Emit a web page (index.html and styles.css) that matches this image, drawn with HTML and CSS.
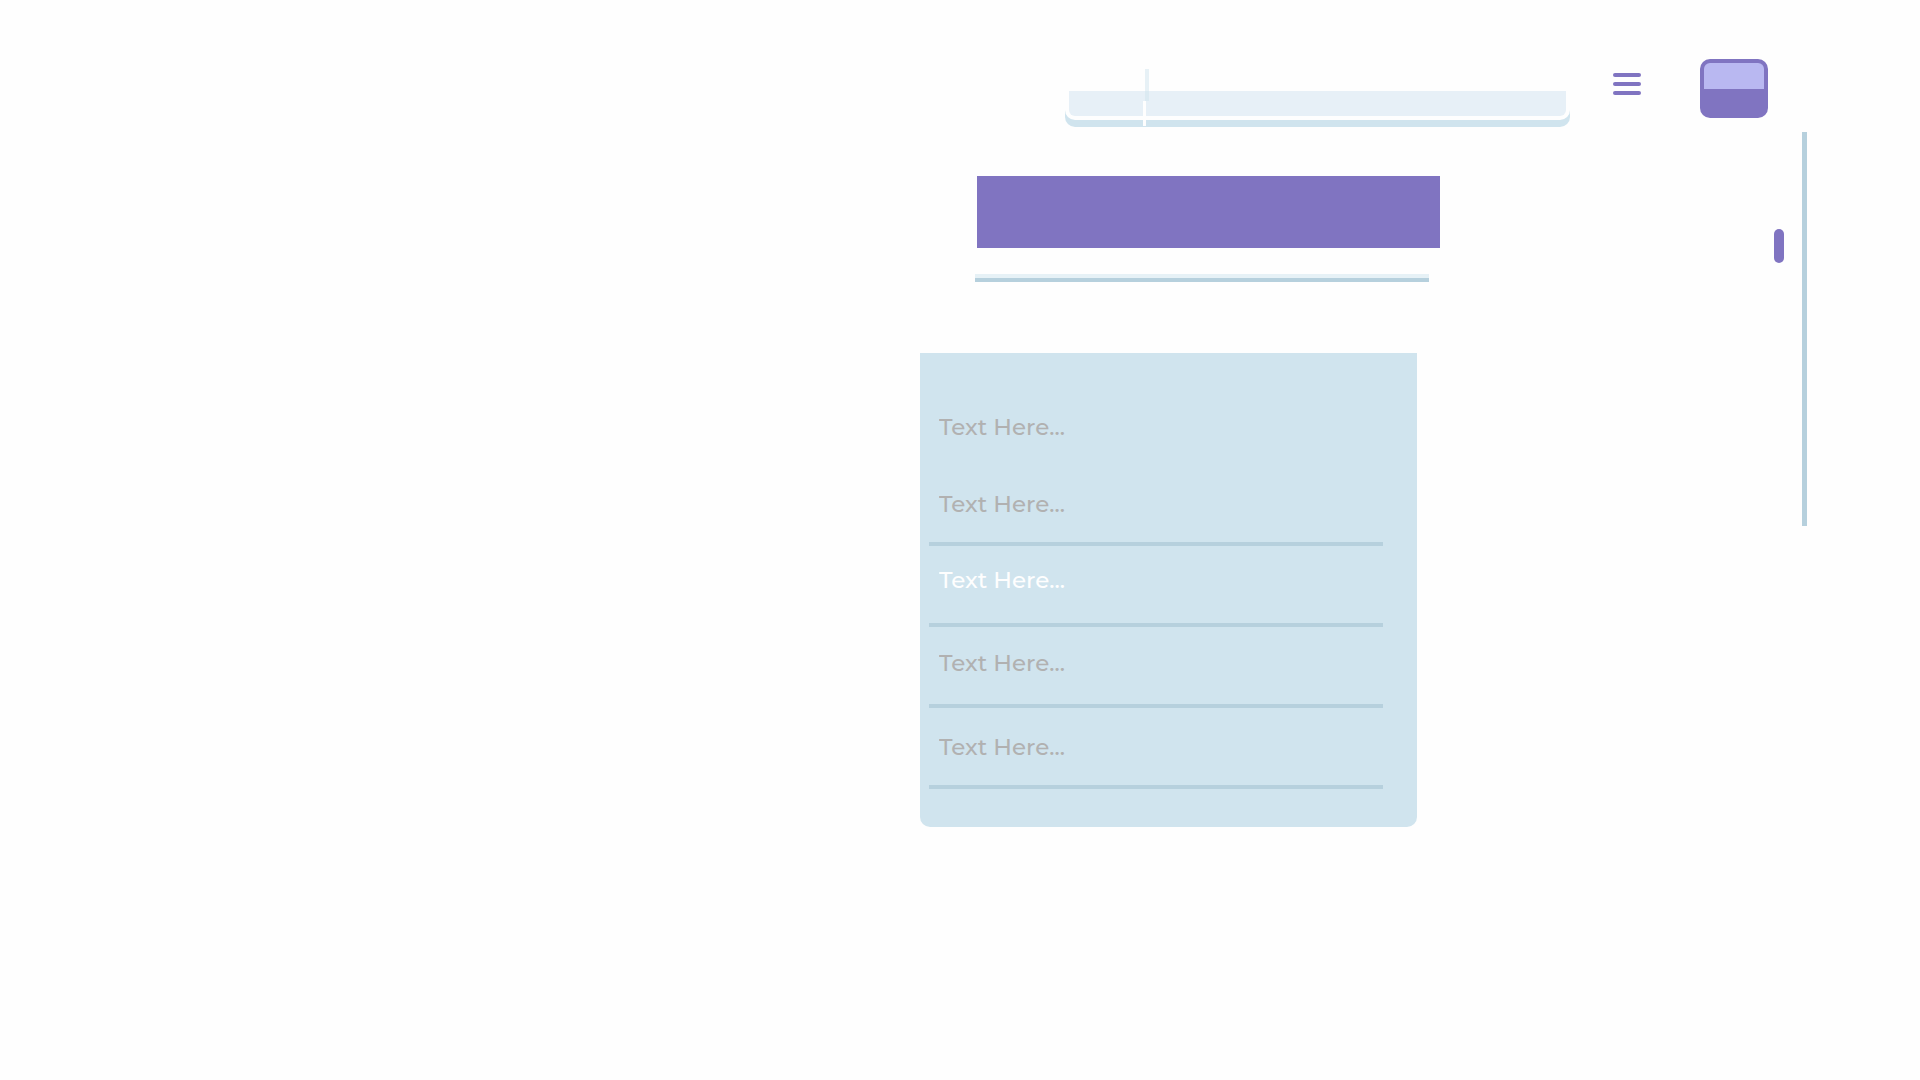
FILE: index.html
```html
<!DOCTYPE html>
<html lang="en">
<head>
<meta charset="utf-8">
<meta name="viewport" content="width=device-width, initial-scale=1">
<title>Form</title>
<link rel="stylesheet" href="styles.css">
</head>
<body>
<header class="topbar">
  <div class="search">
    <div class="search-frame">
      <input class="search-input" type="text" aria-label="Search">
    </div>
    <span class="caret"></span>
  </div>
  <button class="menu-button" type="button" aria-label="Menu">
    <span class="menu-bar"></span>
    <span class="menu-bar"></span>
    <span class="menu-bar"></span>
  </button>
  <button class="tile" type="button" aria-label="Account"><span class="tile-top"></span></button>
</header>
<div class="body-grid">
  <main class="content">
    <div class="banner"></div>
    <div class="divider"></div>
    <form class="panel">
      <div class="field field-first"><input class="field-input" type="text" placeholder="Text Here..." aria-label="Field 1"></div>
      <div class="field"><input class="field-input" type="text" placeholder="Text Here..." aria-label="Field 2"></div>
      <div class="field field-active"><input class="field-input" type="text" placeholder="Text Here..." aria-label="Field 3"></div>
      <div class="field field-raised"><input class="field-input" type="text" placeholder="Text Here..." aria-label="Field 4"></div>
      <div class="field"><input class="field-input" type="text" placeholder="Text Here..." aria-label="Field 5"></div>
    </form>
  </main>
  <aside class="rail">
    <span class="rail-thumb"></span>
    <span class="rail-track"></span>
  </aside>
</div>
</body>
</html>
```

FILE: styles.css
```css
* { box-sizing: border-box; }

body {
  margin: 0;
  background: #fefefe;
  font-family: Montserrat, Inter, "Open Sans", sans-serif;
}

button { border: 0; padding: 0; background: none; cursor: pointer; }

.topbar {
  display: grid;
  grid-template-columns: 1065fr 505fr 43fr 28fr 59fr 68fr 152fr;
  align-items: start;
  padding: 59px 0 5px;
}

/* Search box: pale field, white rim, blue lower edge */
.search {
  grid-column: 2;
  position: relative;
  margin-top: 32px;
  padding-bottom: 7px;
  background: linear-gradient(#fefefe 16px, #d0e4ee 16px);
  border-radius: 0 0 10px 10px;
}

.search-frame {
  padding: 0 4px 4px;
  background: #fefefe;
  border-radius: 0 0 10px 10px;
}

.search-input {
  display: block;
  width: 100%;
  height: 25px;
  padding: 0 8px;
  border: 0;
  border-radius: 0 0 6px 6px;
  background: #e7f0f7;
  font: inherit;
}

.caret {
  position: absolute;
  left: 78px;
  top: 10px;
  width: 3px;
  height: 25px;
  background: #fefefe;
}

.caret::before {
  content: "";
  position: absolute;
  left: 2px;
  top: -32px;
  width: 4px;
  height: 32px;
  background: rgba(208, 228, 238, 0.5);
}

.menu-button {
  grid-column: 4;
  display: grid;
  gap: 5px;
  margin-top: 14px;
}

.menu-bar {
  height: 4px;
  border-radius: 2px;
  background: #8074c1;
}

.tile {
  grid-column: 6;
  height: 59px;
  padding: 4px 4px 29px;
  border-radius: 10px;
  background: #8074c1;
}

.tile-top {
  display: block;
  height: 26px;
  border-radius: 6px 6px 0 0;
  background: #b9b8f1;
}

.body-grid {
  display: grid;
  grid-template-columns: 920fr 520fr 334fr 33fr 113fr;
  align-items: start;
}

.content { grid-column: 2; padding-top: 44px; }

.banner {
  height: 72px;
  margin-left: 57px;
  background: #8074c1;
}

.divider {
  height: 8px;
  margin: 26px 11px 0 55px;
  background: #b6d0dd;
  border-top: 4px solid #e6f1f6;
}

.panel {
  margin: 71px 23px 0 0;
  padding: 36px 34px 38px 9px;
  border-radius: 0 0 10px 10px;
  background: #d0e4ee;
}

.field {
  display: flex;
  align-items: center;
  height: 81px;
  padding-left: 10px;
  border-bottom: 4px solid #b6d0dd;
}

.field-first { height: 76px; border-bottom: 0; }
.field-raised { padding-bottom: 6px; }
.field-active { padding-bottom: 10px; }

.field-input {
  width: 100%;
  height: 28px;
  padding: 0;
  border: 0;
  background: none;
  font-family: inherit;
  font-size: 23px;
  font-weight: 500;
  line-height: 28px;
  color: #505050;
}

.field-input::placeholder { color: #b1b1b1; opacity: 1; }
.field-active .field-input::placeholder { color: #fefefe; }

.rail {
  grid-column: 4;
  display: flex;
  justify-content: space-between;
}

.rail-thumb {
  width: 10px;
  height: 34px;
  margin-top: 97px;
  border-radius: 5px;
  background: #8074c1;
}

.rail-track {
  width: 5px;
  height: 394px;
  background: #b6d0dd;
}
```
